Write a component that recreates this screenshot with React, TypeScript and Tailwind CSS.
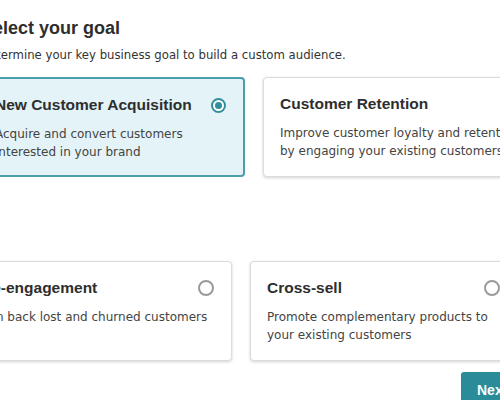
import React, { useState } from "react";

interface Goal {
  id: string;
  title: string;
  desc: string;
  width: string;
}

const topGoals: Goal[] = [
  { id: "acq", title: "New Customer Acquisition", desc: "Acquire and convert customers interested in your brand", width: "w-[268px]" },
  { id: "ret", title: "Customer Retention", desc: "Improve customer loyalty and retention by engaging your existing customers", width: "w-[285px]" },
];

const bottomGoals: Goal[] = [
  { id: "re", title: "Re-engagement", desc: "Win back lost and churned customers", width: "w-[268px]" },
  { id: "cross", title: "Cross-sell", desc: "Promote complementary products to your existing customers", width: "w-[268px]" },
];

function Radio({ checked }: { checked: boolean }) {
  if (checked) {
    return (
      <span className="w-[15px] h-[15px] shrink-0 rounded-full border-2 border-[#2f8f9c] bg-white flex items-center justify-center">
        <span className="w-[7px] h-[7px] rounded-full bg-[#2f8f9c]" />
      </span>
    );
  }
  return <span className="w-[16px] h-[16px] shrink-0 rounded-full border-2 border-[#9a9a9a] bg-white" />;
}

function GoalCard({ goal, selected, onSelect }: { goal: Goal; selected: boolean; onSelect: () => void }) {
  return (
    <button
      onClick={onSelect}
      className={
        goal.width +
        " h-[100px] shrink-0 text-left rounded-[4px] pt-4 pl-4 pr-[17px] flex flex-col " +
        (selected
          ? "bg-[#e3f3f7] border-2 border-[#4a9fab]"
          : "bg-white border border-[#dcdcdc] shadow-[0_1px_3px_rgba(0,0,0,0.18)]")
      }
    >
      <div className="flex items-center justify-between gap-3">
        <span className="text-[15.5px] leading-5 font-bold text-[#2e2e2e] whitespace-nowrap font-['Liberation_Sans',Arial,sans-serif]">
          {goal.title}
        </span>
        <Radio checked={selected} />
      </div>
      <p className="mt-2.5 text-[12px] leading-[18px] text-[#444] font-['DejaVu_Sans',Verdana,sans-serif]">
        {goal.desc}
      </p>
    </button>
  );
}

export default function App() {
  const [goal, setGoal] = useState("acq");

  return (
    <div className="w-[500px] h-[400px] overflow-hidden bg-white flex flex-col">
      <div className="ml-[-19px] mt-4 whitespace-nowrap">
        <h1 className="text-[18px] leading-6 font-bold text-[#2e2e2e] font-['Liberation_Sans',Arial,sans-serif]">
          Select your goal
        </h1>
        <p className="mt-[7px] ml-[-1px] text-[11.7px] leading-4 text-[#333] font-['DejaVu_Sans',Verdana,sans-serif]">
          Determine your key business goal to build a custom audience.
        </p>
      </div>

      <div className="mt-[14px] ml-[-23px] flex gap-[18px]">
        {topGoals.map((g) => (
          <GoalCard key={g.id} goal={g} selected={goal === g.id} onSelect={() => setGoal(g.id)} />
        ))}
      </div>

      <div className="mt-[6px] h-[3px] w-full bg-[#e2e2e2]" />

      <div className="mt-[78px] ml-[-36px] flex gap-[18px]">
        {bottomGoals.map((g) => (
          <GoalCard key={g.id} goal={g} selected={goal === g.id} onSelect={() => setGoal(g.id)} />
        ))}
      </div>

      <div className="mt-[11px] pl-[461px]">
        <button className="h-9 px-4 rounded-[3px] bg-[#2a8c99] text-white text-[14px] font-bold font-['Liberation_Sans',Arial,sans-serif]">
          Next
        </button>
      </div>
    </div>
  );
}
